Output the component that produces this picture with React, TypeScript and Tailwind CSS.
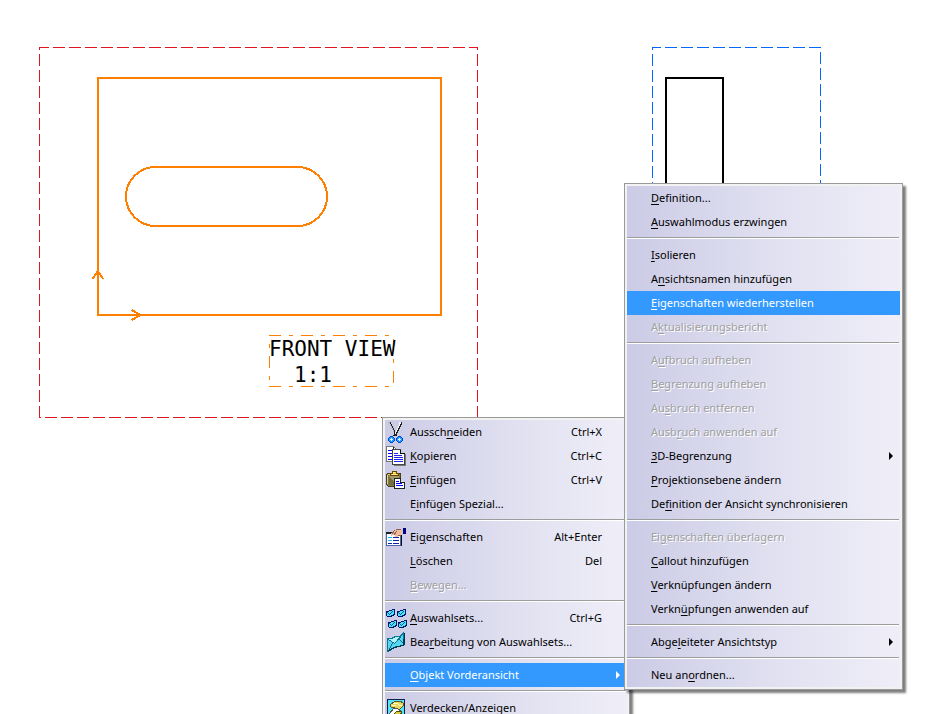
import type { ReactNode } from 'react'
import { clsx } from 'clsx'

/* ── Toolbar-style icons ── */
function Icon({ children }: { children: ReactNode }) {
  return (
    <svg width="22" height="22" viewBox="0 0 22 22" shapeRendering="crispEdges" aria-hidden="true">
      {children}
    </svg>
  )
}

function CutIcon() {
  return (
    <Icon>
      <g fill="#222">
        <path d="M4 1h1v2h1v2h1v2h1v2h1v2h1v2h1v2h-2v-2h-1v-2h-1v-2h-1v-2h-1v-2h-1v-2h-1v-2h1z" />
        <path d="M15 1h1v3h-1v2h-1v2h-1v2h-1v2h-1v2h-1v1h-3v-1h1v-1h1v-2h1v-2h1v-2h1v-2h1v-2h1v-2h1z" />
      </g>
      <path d="M2 1h2v2h1v2h1v2h1v2h1v2h-1v-2h-1v-2h-1v-2h-1v-2h-1v-1h-1z" fill="#bbb" />
      <path d="M13 1h2v2h-1v2h-1v2h-1v2h-1v2h-1v2h-1v-2h1v-2h1v-2h1v-2h1z" fill="#f8f8f8" />
      <path d="M4 15h3v1h1v1h1v3h-1v1h-1v1h-3v-1h-1v-1h-1v-3h1v-1h1zM12 15h3v1h1v1h1v3h-1v1h-1v1h-3v-1h-1v-1h-1v-3h1v-1h1z" fill="#0048d0" />
      <path d="M4 16h3v1h1v3h-1v1h-3v-1h-1v-3h1zM12 16h3v1h1v3h-1v1h-3v-1h-1v-3h1z" fill="#2098ff" />
      <path d="M5 17h1v1h1v1h-1v1h-1v-1h-1v-1h1zM13 17h1v1h1v1h-1v1h-1v-1h-1v-1h1z" fill="#d8f0ff" />
    </Icon>
  )
}

function CopyIcon() {
  return (
    <Icon>
      <path d="M.5 1.500h7l3 3v12h-10z" fill="#fff" stroke="#777" />
      <path d="M7.500 1.500v3h3" fill="none" stroke="#222" />
      <path d="M2 5h4v1h-4zM2 8h4v1h-4zM2 11h4v1h-4zM2 14h4v1h-4z" fill="#0000f0" />
      <path d="M6.500 4.500h8l4 4v11h-12z" fill="#fff" stroke="#444" />
      <path d="M14.500 4.500v4h4" fill="#ccd" stroke="#111" />
      <path d="M19 9h1v12h-12v-1h11z" fill="#777" />
      <path d="M8 8h4v1h-4zM8 10h8v1h-8zM8 12h9v1h-9zM8 14h9v1h-9zM8 16h9v1h-9z" fill="#2020f0" />
    </Icon>
  )
}

function PasteIcon() {
  return (
    <Icon>
      <path d="M1.500 4.500h13v13h-12l-2-2v-10z" fill="#807848" stroke="#484018" />
      <path d="M2 5h11v1h-11zM1 6h1v9h-1z" fill="#d8d0a0" />
      <path d="M3 7h10v9h-10z" fill="#a09a68" />
      <path d="M3 7l8 9h-8z" fill="#746d40" />
      <path d="M4.500 6.500v-2h2v-2h4v2h2v2z" fill="#ffc820" stroke="#6c4400" />
      <path d="M6 5h5v1h-5zM7 3h2v1h-2z" fill="#fff4a0" />
      <path d="M8.500 9.500h6l4 4v6h-10z" fill="#fff" stroke="#222" />
      <path d="M14.500 9.500v4h4" fill="#dde" stroke="#222" />
      <path d="M10 12h3v1h-3zM10 14h6v1h-6zM10 16h7v1h-7z" fill="#0000f0" />
    </Icon>
  )
}

function PropertiesIcon() {
  return (
    <Icon>
      <path d="M.5 6.500h14v13h-14z" fill="#fff" stroke="#4868a8" />
      <path d="M0 6h15v2h-15z" fill="#18202c" />
      <path d="M15 8h1v12h-1z" fill="#111" />
      <path d="M2 11h4v1h-4zM2 14h4v1h-4z" fill="#18b8e8" />
      <path d="M7 11h6v1h-6zM2 17h4v1h-4zM7 14h6v1h-6zM7 17h6v1h-6z" fill="#1020a8" />
      <path d="M5 8l3-4h2l1-1h5v6h-3l-2 2h-2v-2h-2l-2 1z" fill="#f0bc9c" />
      <path d="M5.500 8.500l3-4M7.500 9.500l3-4M10 3.500h5M12 9.500h3" stroke="#8b6250" fill="none" />
      <path d="M16 3h1v6h-1z" fill="#b8cce8" />
      <path d="M17 2h3v6h-3z" fill="#000080" />
    </Icon>
  )
}

function SmallEnvelope({ x, y }: { x: number; y: number }) {
  return (
    <g transform={`translate(${x} ${y})`}>
      <path d="M0 2h3v-1h3v-1h3v6h-1v1h-2v1h-5v-1h-1z" fill="#00186c" />
      <path d="M1 3h2v-1h3v-1h2v4h-1v1h-2v1h-4z" fill="#50e0f8" />
      <path d="M1 3h1v1h1v1h1v-1h1v-1h1v-1h1v1h-1v1h-1v1h-1v1h-1v-1h-1v-1h-1z" fill="#105890" />
    </g>
  )
}

function SelectionSetsIcon() {
  return (
    <Icon>
      <SmallEnvelope x={0} y={2} />
      <SmallEnvelope x={11} y={2} />
      <SmallEnvelope x={2} y={13} />
      <SmallEnvelope x={12} y={13} />
    </Icon>
  )
}

function EditSetsIcon() {
  return (
    <Icon>
      <path d="M1.500 7.500h4l4-2h4l4-4v12l-3 2h-4l-4 2-4 3h-1z" fill="#58d8f0" stroke="#087898" />
      <path d="M2 8h4l4-2h4l3-3-8 9z" fill="#b0f4fc" />
      <path d="M2.500 8.500l6 4 9-10M3.500 18.500l3-7M17.500 12.500l-4-4" fill="none" stroke="#107090" />
      <path d="M18 2h1v12h-1v1h-3v1h-4v1h-3v1h-2v1h-2v1h-2v-1h1v-1h2v-1h2v-1h3v-1h4v-1h3z" fill="#003850" />
    </Icon>
  )
}

function HideShowIcon() {
  return (
    <Icon>
      <path d="M1.500 2.500h17v18h-17z" fill="#50e8f8" stroke="#111c50" />
      <path d="M4 8l5-4h5l3 2v3l-3 3h-4l-2-2h-3z" fill="#e8d860" stroke="#605820" />
      <path d="M7 6h4l2 2h3M6 8h4" fill="none" stroke="#fffcc8" strokeWidth="1" />
      <path d="M3 17l5-6 4 1 3 2-4 4-4 1z" fill="#fff" stroke="#555" />
      <path d="M8 17l3-3h4l1 2-4 2z" fill="#dccc40" stroke="#504810" />
    </Icon>
  )
}

/* ── Menu data, "&" marks the access key ── */
type Entry =
  | 'separator'
  | {
      label: string
      shortcut?: string
      icon?: ReactNode
      disabled?: boolean
      active?: boolean
      submenu?: boolean
    }

const CONTEXT_MENU: Entry[] = [
  { label: 'Aussch&neiden', shortcut: 'Ctrl+X', icon: <CutIcon /> },
  { label: '&Kopieren', shortcut: 'Ctrl+C', icon: <CopyIcon /> },
  { label: '&Einfügen', shortcut: 'Ctrl+V', icon: <PasteIcon /> },
  { label: 'E&infügen Spezial...' },
  'separator',
  { label: 'Ei&genschaften', shortcut: 'Alt+Enter', icon: <PropertiesIcon /> },
  { label: '&Löschen', shortcut: 'Del' },
  { label: '&Bewegen...', disabled: true },
  'separator',
  { label: '&Auswahlsets...', shortcut: 'Ctrl+G', icon: <SelectionSetsIcon /> },
  { label: 'Bea&rbeitung von Auswahlsets...', icon: <EditSetsIcon /> },
  'separator',
  { label: '&Objekt Vorderansicht', active: true, submenu: true },
  'separator',
  { label: '&Verdecken/Anzeigen', icon: <HideShowIcon /> },
]

const VIEW_MENU: Entry[] = [
  { label: '&Definition...' },
  { label: '&Auswahlmodus erzwingen' },
  'separator',
  { label: '&Isolieren' },
  { label: 'A&nsichtsnamen hinzufügen' },
  { label: '&Eigenschaften wiederherstellen', active: true },
  { label: 'A&ktualisierungsbericht', disabled: true },
  'separator',
  { label: 'A&ufbruch aufheben', disabled: true },
  { label: '&Begrenzung aufheben', disabled: true },
  { label: 'Au&sbruch entfernen', disabled: true },
  { label: 'Ausb&ruch anwenden auf', disabled: true },
  { label: '&3D-Begrenzung', submenu: true },
  { label: '&Projektionsebene ändern' },
  { label: 'De&finition der Ansicht synchronisieren' },
  'separator',
  { label: 'Ei&genschaften überlagern', disabled: true },
  { label: '&Callout hinzufügen' },
  { label: '&Verknüpfungen ändern' },
  { label: 'Verkn&üpfungen anwenden auf' },
  'separator',
  { label: 'Abge&leiteter Ansichtstyp', submenu: true },
  'separator',
  { label: 'Neu an&ordnen...' },
]

function Label({ text }: { text: string }) {
  const at = text.indexOf('&')
  return (
    <span className="whitespace-nowrap">
      {text.slice(0, at)}
      <span className="underline decoration-1 underline-offset-2">{text[at + 1]}</span>
      {text.slice(at + 2)}
    </span>
  )
}

function Menu({ name, entries, className }: { name: string; entries: Entry[]; className: string }) {
  return (
    <div className={clsx('absolute border border-[#9a9a9a] bg-[#f2f2f2] p-0.5 shadow-[3px_3px_2px_rgba(0,0,0,0.5)]', className)}>
      <ul role="menu" aria-label={name} className="bg-linear-to-r from-[#cccbe6] via-[#dfdff0] to-[#efeef8]">
        {entries.map((e, i) =>
          e === 'separator' ? (
            <li key={i} role="separator" className="pt-[3px] pr-px pb-1">
              <div className="h-0.5 border-t border-[#9c9c9c] bg-white" />
            </li>
          ) : (
            <li key={i} role="none">
              <button
                type="button"
                role="menuitem"
                disabled={e.disabled}
                aria-haspopup={e.submenu ? 'menu' : undefined}
                className={clsx(
                  'flex h-6 w-full items-center pr-[7px] pl-px text-left',
                  e.active && 'bg-[#3399ff] text-white',
                  e.disabled && 'text-[#a0a0a0] [text-shadow:1px_1px_0_#fff]',
                )}
              >
                <span className={clsx('shrink-0', entries === CONTEXT_MENU ? 'w-6' : 'w-[23px]')}>{e.icon}</span>
                <Label text={e.label} />
                {e.shortcut && <span className="ml-auto pr-[18px]">{e.shortcut}</span>}
                {e.submenu && (
                  <svg className="ml-auto" width="4" height="8" viewBox="0 0 4 8" aria-hidden="true">
                    <path d="M0 0l4 4-4 4z" fill="currentColor" />
                  </svg>
                )}
              </button>
            </li>
          ),
        )}
      </ul>
    </div>
  )
}

/* ── Drafting sheet with the front view and the side view ── */
function Sheet() {
  return (
    <svg className="absolute inset-0 h-full w-full" role="img" aria-label="FRONT VIEW 1:1" shapeRendering="crispEdges" fill="none">
      <g stroke="#e2141c" strokeDasharray="12 4">
        <path d="M39 47.500H478" strokeDashoffset="2" />
        <path d="M39 417.500H478" strokeDashoffset="10" />
        <path d="M39.500 47V418M477.500 47V418" strokeDashoffset="9" />
      </g>
      <g stroke="#0068ff" strokeDasharray="12 4">
        <path d="M652 47.500H821" strokeDashoffset="3" />
        <path d="M652.500 47V418" strokeDashoffset="9" />
        <path d="M820.500 47V418" strokeDashoffset="11" />
      </g>
      <path d="M666 315V78H723V315z" stroke="#000" strokeWidth="2" />
      <g stroke="#ff8000" strokeWidth="2">
        <path d="M98 78H441V315H98z" />
        <rect x="126" y="167" width="201" height="59" rx="29.500" />
        <path d="M92.500 279L98 271L103 279M131.500 310L141 315L131.500 320" />
      </g>
      <g stroke="#ff8000" strokeDasharray="12 8 4 8">
        <path d="M269 335.500H394M269 386.500H394" />
        <path d="M269.500 335V387" strokeDashoffset="11" />
        <path d="M393.500 335V387" strokeDashoffset="28" />
      </g>
      <g className="font-['DejaVu_Sans_Mono',monospace] text-[21px]" fill="#000">
        <text x="269" y="356">FRONT VIEW</text>
        <text x="294" y="382">1:1</text>
      </g>
    </svg>
  )
}

export default function App() {
  return (
    <main className="relative h-screen w-full overflow-hidden bg-white font-['Noto_Sans','Open_Sans',sans-serif] text-[11px] text-black">
      <Sheet />
      <Menu name="Kontextmenü" entries={CONTEXT_MENU} className="top-[417px] left-[382px] w-[248px]" />
      <Menu name="Objekt Vorderansicht" entries={VIEW_MENU} className="top-[183px] left-[624px] w-[279px]" />
    </main>
  )
}
